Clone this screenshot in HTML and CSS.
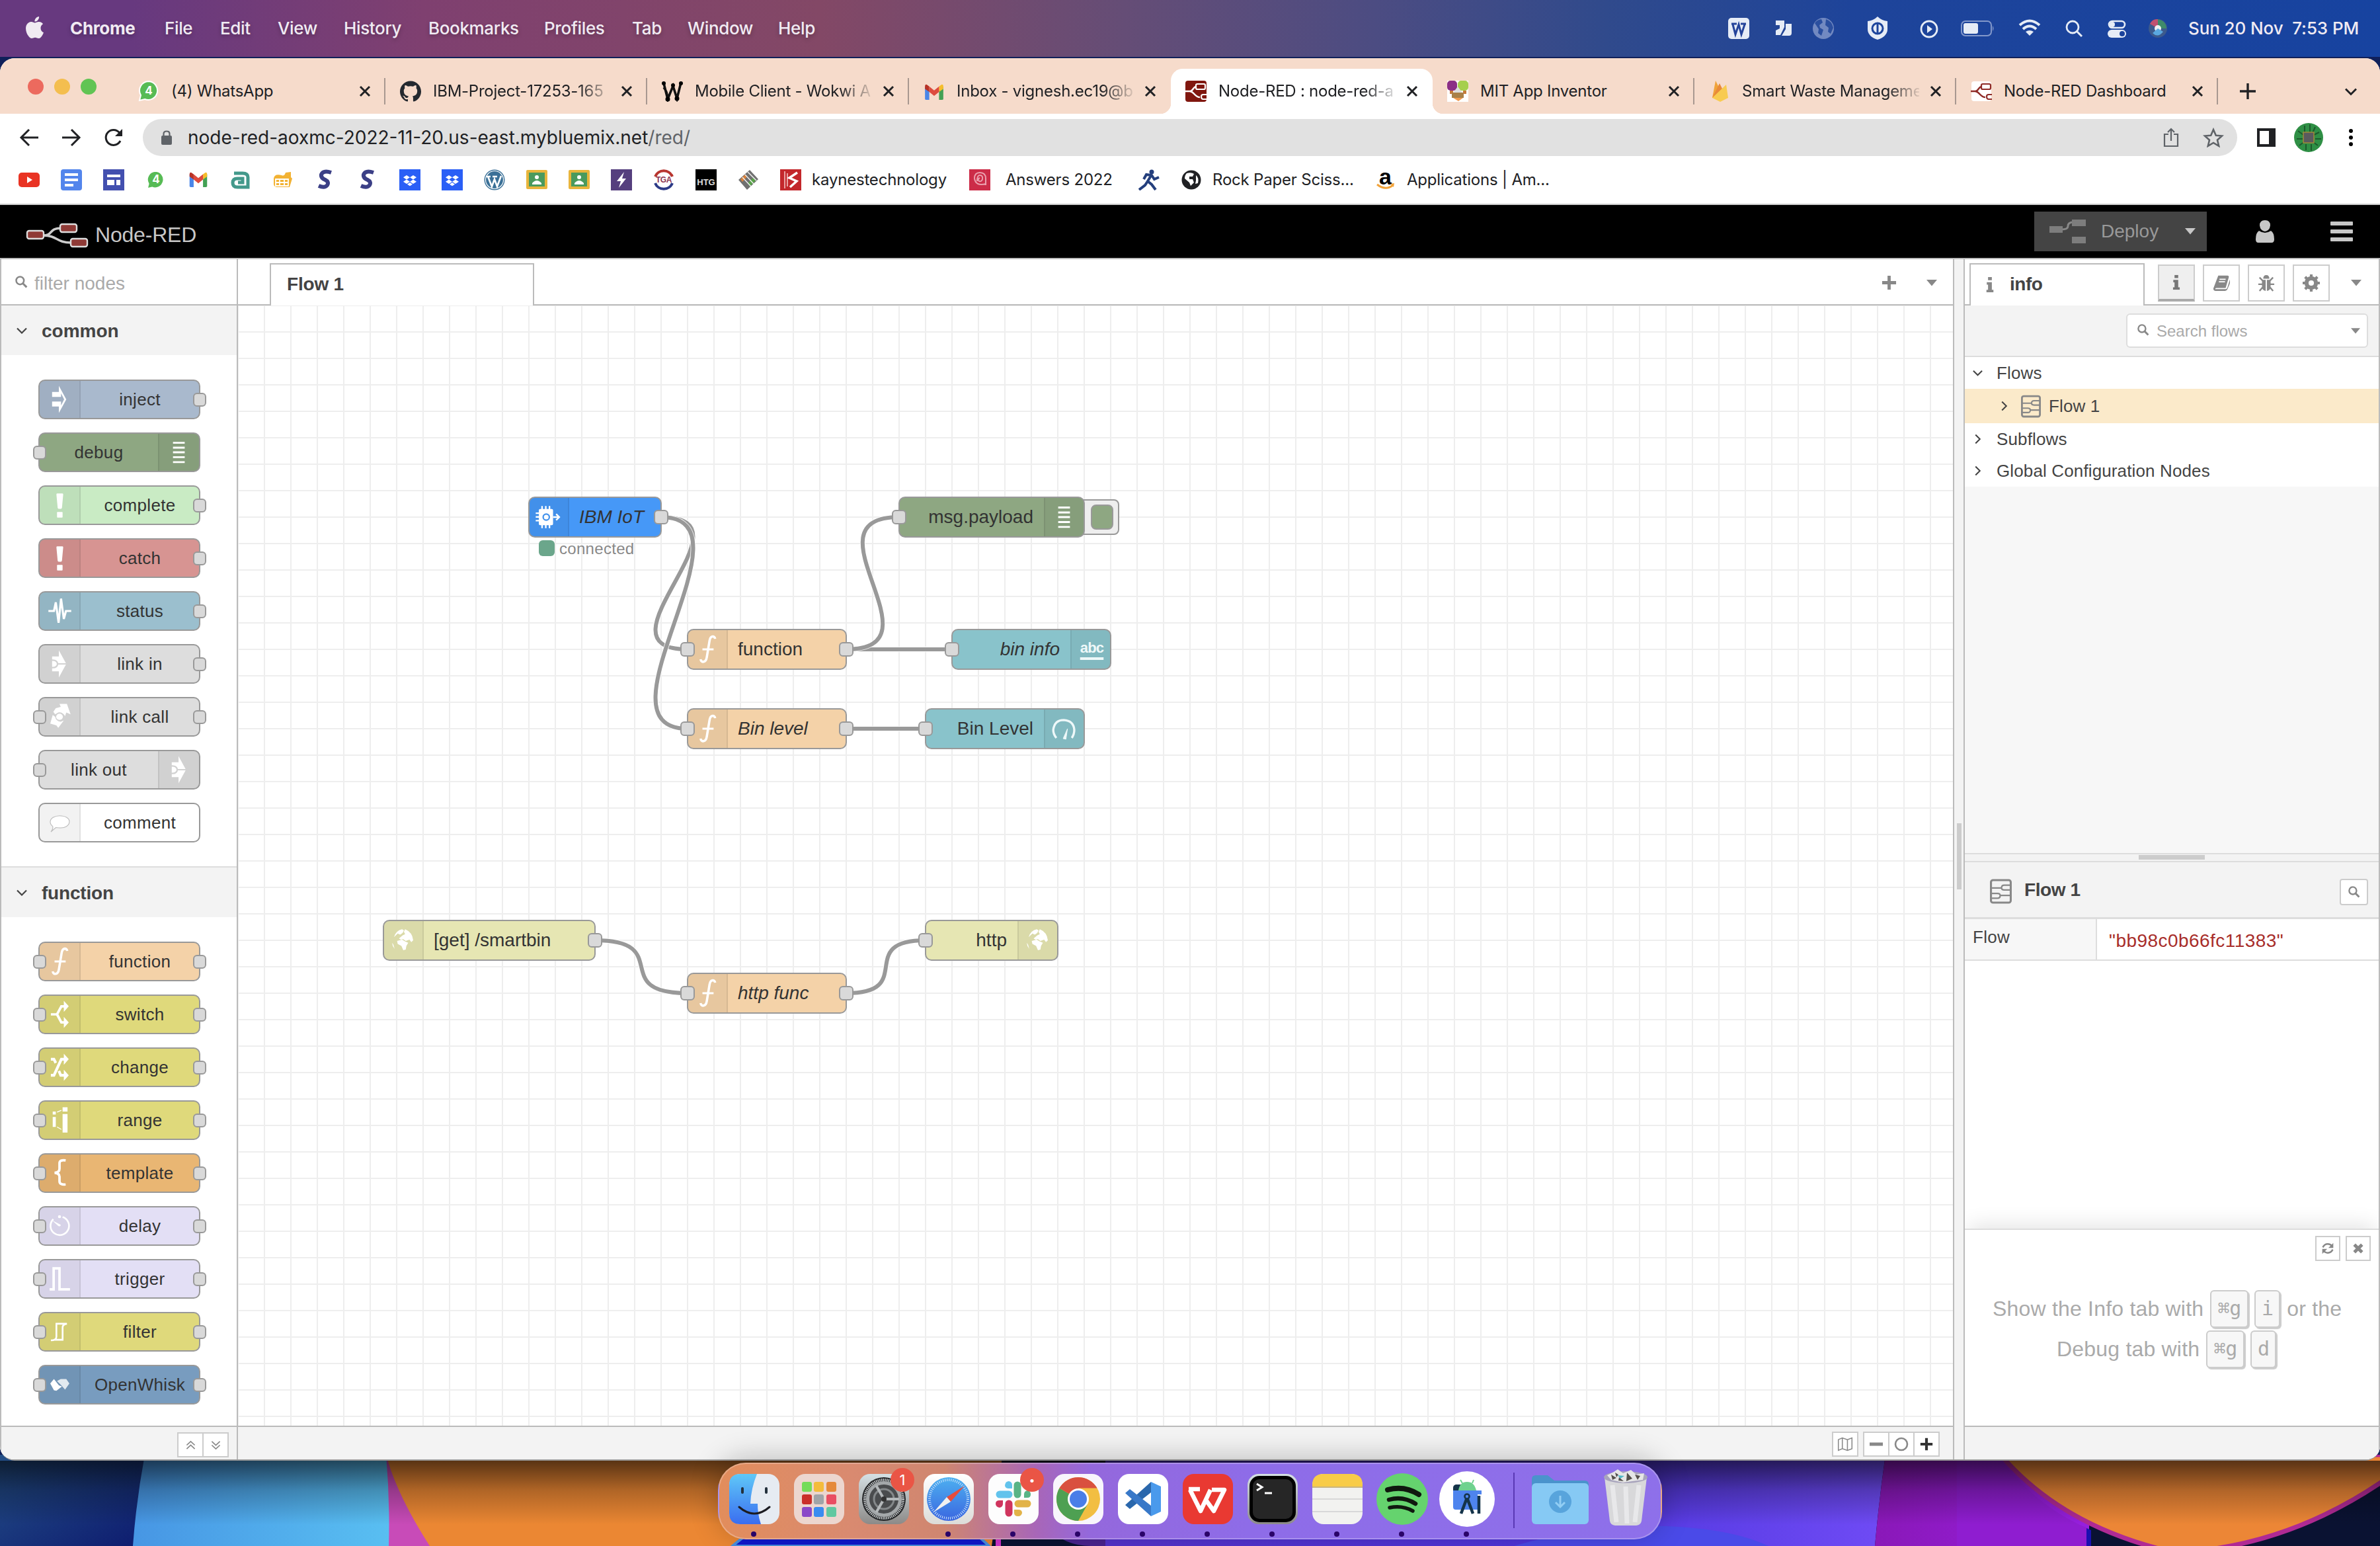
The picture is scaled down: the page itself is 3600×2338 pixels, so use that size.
FILE: index.html
```html
<!DOCTYPE html>
<html lang="en">
<head>
<meta charset="utf-8">
<title>Node-RED : node-red-aoxmc</title>
<link rel="stylesheet" href="styles.css">
</head>
<body>
<svg class="defs" width="0" height="0">
  <defs>
    <symbol id="i-x" viewBox="0 0 24 24"><path d="M5 5L19 19M19 5L5 19" stroke="#202124" stroke-width="3" fill="none"/></symbol>
    <symbol id="i-search" viewBox="0 0 24 24"><circle cx="10" cy="10" r="7" fill="none" stroke="currentColor" stroke-width="3"/><path d="M15 15L22 22" stroke="currentColor" stroke-width="3.6"/></symbol>
    <symbol id="i-down" viewBox="0 0 16 10"><path d="M0 0H16L8 9.5Z" fill="currentColor"/></symbol>
    <symbol id="i-chev" viewBox="0 0 16 10"><path d="M1 1.5L8 8.5L15 1.5" fill="none" stroke="currentColor" stroke-width="2.2"/></symbol>
    <symbol id="i-plus" viewBox="0 0 24 24"><path d="M9.5 1h5v8.500h8.500v5h-8.500v8.500h-5v-8.500h-8.500v-5h8.500z" fill="currentColor"/></symbol>
    <symbol id="i-info" viewBox="0 0 12 24"><path d="M3 0h6v5h-6zM1 8h8v12h2.500v4H.5v-4H3v-8H1z" fill="currentColor"/></symbol>
    <symbol id="i-flow" viewBox="0 0 32 36"><rect x="1.500" y="1.500" width="29" height="33" rx="3" fill="none" stroke="#888" stroke-width="3"/><path d="M2 13H17M30 9H21Q17 9 17 13Q17 16 21 16H30M2 21H11Q15 21 15 24Q15 28 11 28H2M15 24H30" fill="none" stroke="#888" stroke-width="2.200"/></symbol>
    <symbol id="i-gmail" viewBox="0 0 32 26"><path d="M1 4V24Q1 26 3 26H8V11Z" fill="#4a86e8"/><path d="M31 4V24Q31 26 29 26H24V11Z" fill="#43a155"/><path d="M24 4L28 1Q31 0 31 4V8L24 13Z" fill="#f6bd2b"/><path d="M8 4L4 1Q1 0 1 4V8L8 13Z" fill="#b83226"/><path d="M8 4L16 10.500L24 4V13L16 19.500L8 13Z" fill="#dd4b3e"/></symbol>
    <symbol id="i-wa" viewBox="0 0 32 32"><path d="M16 1A14 14 0 0 0 4 22L2 30L10 28A14 14 0 1 0 16 1Z" fill="#57bb55" stroke="#fff" stroke-width="2"/></symbol>
    <symbol id="i-nr" viewBox="0 0 32 32"><path d="M0 16H7C12 16 11 9 17 9M7 16C14 17 14 25 22 25" fill="none" stroke="currentColor" stroke-width="2.400"/><rect x="16" y="5" width="14" height="8" rx="2" fill="none" stroke="currentColor" stroke-width="2.200"/><path d="M32 21H27Q24 21 24 24Q24 28 27 28H32" fill="none" stroke="currentColor" stroke-width="2.200"/></symbol>
    <symbol id="i-dropbox" viewBox="0 0 32 32"><rect width="32" height="32" fill="#2a5ff6"/><path d="M11 9l5 3.200-5 3.200-5-3.200zM21 9l5 3.200-5 3.200-5-3.200zM11 15.500l5 3.200-5 3.200-5-3.200zM21 15.500l5 3.200-5 3.200-5-3.200zM16 20l4 2.700-4 2.600-4-2.600z" fill="#fff"/></symbol>
    <symbol id="i-s" viewBox="0 0 32 32"><path d="M25 5Q13 1 10 8Q9 13 16 16Q22 19 19 24Q15 29 6 25" fill="none" stroke="#3b3f86" stroke-width="6"/></symbol>
    <symbol id="i-class" viewBox="0 0 32 32"><rect y="1" width="32" height="29" rx="2" fill="#e9b53c"/><rect x="4" y="5" width="24" height="21" fill="#4a9a5d"/><circle cx="16" cy="12" r="3" fill="#fff"/><path d="M9 21Q16 13 23 21V23H9Z" fill="#fff"/></symbol>
    <symbol id="n-inject" viewBox="0 0 62 60"><path d="M19 18H30V8L42 30L30 52V41.500H19V33.500H33.500V40L38.500 30L33.500 20V26H19Z" fill="#fff"/></symbol>
    <symbol id="n-debug" viewBox="0 0 62 60"><path d="M21 14.500H40M21 22.500H40M21 30H40M21 38H40M21 46H40" stroke="#fff" stroke-width="3"/></symbol>
    <symbol id="n-alert" viewBox="0 0 62 60"><path d="M26 12.500Q26 11 27.500 11H35.500Q37 11 37 12.500L35 34Q34.500 36 33 36H30Q28.500 36 28 34Z" fill="#fff"/><rect x="27" y="41" width="9" height="9" rx="1" fill="#fff"/></symbol>
    <symbol id="n-status" viewBox="0 0 62 60"><path d="M13 30H22L25 16L29.500 49L33.500 10L38 43L41.500 30H50" fill="none" stroke="#fff" stroke-width="3.400"/></symbol>
    <symbol id="n-link" viewBox="0 0 62 60"><path d="M19 18H30V8L42 30L30 52V42H19Z" fill="#fff"/><path d="M18 24Q27 23 28 30Q27 37 18 36M28 30H43" fill="none" stroke="#d2d2d2" stroke-width="2.400"/></symbol>
    <symbol id="n-call" viewBox="0 0 62 60"><path d="M25 16L33 14L31 9L43 9L49 26L42 23L40 29Q36 22 29 23L24 26L21 22Z" fill="#fff"/><path d="M20 27L24 30Q25 37 33 38L38 36L29 48L26 44L16 41Z" fill="#fff"/><ellipse cx="31" cy="30" rx="5.500" ry="5" fill="#fff"/></symbol>
    <symbol id="n-comment" viewBox="0 0 62 60"><path d="M31 19C41 19 47 23 47 28.500C47 35 40 39 31 38.500Q27 38 25 38L17 45Q21 40 20 36Q16 33 16 29C16 23 23 19 31 19Z" fill="#fff" stroke="#bbb" stroke-width="1.200"/></symbol>
    <symbol id="n-fn" viewBox="0 0 62 60"><path d="M43.500 13C43 8 36 7 34.500 16L30 43C28.500 52 21 52 20 46" fill="none" stroke="#fff" stroke-width="3.800"/><path d="M23 30H41" stroke="#fff" stroke-width="3"/></symbol>
    <symbol id="n-switch" viewBox="0 0 62 60"><path d="M17 30H27L34 17H39M27 30L34 43H39" fill="none" stroke="#fff" stroke-width="4"/><path d="M38 8L46 17L38 26ZM38 34L46 43L38 52Z" fill="#fff"/></symbol>
    <symbol id="n-change" viewBox="0 0 62 60"><path d="M17 43H22L34 17H39M17 17H22L25 23M30 36L33 43H39" fill="none" stroke="#fff" stroke-width="4.400"/><path d="M38 8L46 17L38 26ZM38 34L46 43L38 52Z" fill="#fff"/></symbol>
    <symbol id="n-range" viewBox="0 0 62 60"><path d="M20 16h5v5h-5zM20 25h5v16h-5zM36 9h8v7h-8zM36 20h8v30h-8z" fill="#fff"/><path d="M27 17L34 14M27 41L34 45" stroke="#fff" stroke-width="1.500"/></symbol>
    <symbol id="n-tpl" viewBox="0 0 62 60"><path d="M41 9.500Q31 8 31 14V23Q31 29 23 29.500Q31 30 31 36V43Q31 49.500 41 48.500" fill="none" stroke="#fff" stroke-width="4"/></symbol>
    <symbol id="n-delay" viewBox="0 0 62 60"><path d="M36 15.500A15 15 0 1 1 21 19" fill="none" stroke="#fff" stroke-width="2.800"/><path d="M19 21L33 28Q33 32 29 30Z" fill="#fff"/><circle cx="31" cy="15" r="2.500" fill="#fff"/></symbol>
    <symbol id="n-trigger" viewBox="0 0 62 60"><path d="M15 47H21.500V13H31V47H48" fill="none" stroke="#fff" stroke-width="4"/></symbol>
    <symbol id="n-filter" viewBox="0 0 62 60"><path d="M17 44Q26 44 26 38V17H43Q36 18 36 23V43H22" fill="none" stroke="#fff" stroke-width="2.800"/></symbol>
    <symbol id="n-whisk" viewBox="0 0 62 60"><path d="M16 28L22 21L30 31L35 33L26 40L22 39Z" fill="#fff"/><path d="M27 24L33 21L42 21L47 28L40 38L34 31Z" fill="#fff" opacity=".8"/></symbol>
    <symbol id="n-iot" viewBox="0 0 62 60"><path d="M15 19Q15 17 17 17H36Q38 17 38 19V41Q38 43 36 43H17Q15 43 15 41ZM19 12h2.500v6h-2.500zM25 12h2.500v6h-2.500zM31 12h2.500v6h-2.500zM19 42h2.500v6h-2.500zM25 42h2.500v6h-2.500zM31 42h2.500v6h-2.500zM10 22.500h6v2.500h-6zM10 28.500h6v2.500h-6zM10 34.500h6v2.500h-6z" fill="#fff"/><circle cx="27" cy="30" r="5" fill="none" stroke="#4292ec" stroke-width="2.400"/><path d="M38 30H46M43 25L48 30L43 35" fill="none" stroke="#fff" stroke-width="2.600"/></symbol>
    <symbol id="n-globe" viewBox="0 0 62 60"><path d="M16 25Q19 14 29 12L32 14L30 18L26 21L22 19ZM34 12Q46 17 47 30L44 33L41 29L35 31L31 28L27 29L24 27L30 22L34 20L32 16ZM21 31L29 29L34 32L39 34L36 39L35 45L31 46L28 39L22 36ZM13 34L15 37L17 44L14 39Z" fill="#fff"/></symbol>
    <symbol id="n-gauge" viewBox="0 0 62 60"><path d="M18 45Q13 39 13 32Q15 16 30 16Q46 17 47 32Q47 39 43 45" fill="none" stroke="#eef8f9" stroke-width="3.600"/><path d="M29 46L36 30L33.500 47Z" fill="#eef8f9" stroke="#eef8f9"/></symbol>
    <linearGradient id="wBlue" x1="0" y1="0" x2="1" y2="1"><stop offset="0" stop-color="#245088"/><stop offset="1" stop-color="#0d1a6e"/></linearGradient>
    <linearGradient id="wSky" x1="0" y1="0" x2="1" y2="0"><stop offset="0" stop-color="#4796e4"/><stop offset="1" stop-color="#59c0f2"/></linearGradient>
    <linearGradient id="wVio" x1="0" y1="0" x2="1" y2="0"><stop offset="0" stop-color="#5433cc"/><stop offset=".6" stop-color="#4f35dc"/><stop offset="1" stop-color="#6f4bf5"/></linearGradient>
    <linearGradient id="wPur" x1="0" y1="0" x2="1" y2="0"><stop offset="0" stop-color="#8a18b8"/><stop offset="1" stop-color="#971fe0"/></linearGradient>
    <linearGradient id="wShade" x1="0" y1="0" x2="0" y2="1"><stop offset="0" stop-color="#000" stop-opacity=".62"/><stop offset=".35" stop-color="#000" stop-opacity=".25"/><stop offset=".75" stop-color="#000" stop-opacity="0"/></linearGradient>
    <linearGradient id="gFinder" x1="0" y1="0" x2="0" y2="1"><stop offset="0" stop-color="#5fc8f8"/><stop offset="1" stop-color="#3a6df0"/></linearGradient>
    <linearGradient id="gGrey" x1="0" y1="0" x2="0" y2="1"><stop offset="0" stop-color="#d5e0e4"/><stop offset="1" stop-color="#8c8a88"/></linearGradient>
    <linearGradient id="gSafari" x1="0" y1="0" x2="0" y2="1"><stop offset="0" stop-color="#4db0f0"/><stop offset="1" stop-color="#3a66e0"/></linearGradient>
    <linearGradient id="gWhite" x1="0" y1="0" x2="0" y2="1"><stop offset="0" stop-color="#fff"/><stop offset="1" stop-color="#dcdcd8"/></linearGradient>
  </defs>
</svg>

<svg class="wallpaper" viewBox="0 2200 3600 138" width="3600" height="138">
  <rect y="2200" width="3600" height="138" fill="#0a1232"/>
  <rect y="2200" width="230" height="138" fill="url(#wBlue)"/>
  <path d="M219 2200Q206 2270 201 2338H600V2200Z" fill="url(#wSky)"/>
  <path d="M584 2200Q590 2270 588 2338H660L620 2200Z" fill="#c84bb8"/>
  <path d="M584 2200Q600 2260 650 2338H1500L1520 2200Z" fill="#eb8733"/>
  <path d="M1108 2338Q1150 2300 1220 2290H1390Q1460 2300 1496 2338Z" fill="#1018d0" stroke="#4a90e0" stroke-width="4"/>
  <path d="M1506 2320H1514V2338H1506Z" fill="#d432cc"/>
  <path d="M1515 2200H1680V2338H1515Z" fill="#0a1232"/>
  <path d="M1585 2310Q1610 2338 1650 2338H1680V2310Z" fill="#4a2490"/>
  <path d="M1672 2200H2852Q2842 2270 2836 2338H1672Z" fill="url(#wVio)"/>
  <path d="M2290 2338Q2400 2305 2520 2308Q2620 2312 2675 2338Z" fill="#4a4ae8"/>
  <path d="M2852 2200H3160V2338H2836Q2842 2270 2852 2200Z" fill="url(#wPur)"/>
  <path d="M3026 2200Q3120 2310 3290 2348Q3460 2340 3610 2236V2200Z" fill="#ec8636" stroke="#b02a94" stroke-width="7"/>
  <path d="M3020 2200Q3080 2280 3160 2312L3156 2340H2960V2200Z" fill="#8f1dd0"/>
  <path d="M3156 2311L3163 2314V2338H3156Z" fill="#1a10b0"/>
  <rect y="2209" width="3600" height="129" fill="url(#wShade)"/>
</svg>

<header class="menubar">
  <svg class="apple" viewBox="0 0 24 24"><path fill="#f0eaf2" d="M12.152 6.896c-.948 0-2.415-1.078-3.960-1.040-2.040.027-3.910 1.183-4.961 3.014-2.117 3.675-.546 9.103 1.519 12.090 1.013 1.454 2.208 3.090 3.792 3.039 1.520-.065 2.090-.987 3.935-.987 1.831 0 2.350.987 3.960.948 1.637-.026 2.676-1.480 3.676-2.948 1.156-1.688 1.636-3.325 1.662-3.415-.039-.013-3.182-1.221-3.220-4.857-.026-3.040 2.480-4.494 2.597-4.559-1.429-2.090-3.623-2.324-4.390-2.376-2-.156-3.675 1.090-4.610 1.090zM15.530 3.830c.843-1.012 1.400-2.427 1.245-3.830-1.207.052-2.662.805-3.532 1.818-.780.896-1.454 2.338-1.273 3.714 1.338.104 2.715-.688 3.559-1.701"/></svg>
  <nav class="menus"><b>Chrome</b><span>File</span><span>Edit</span><span>View</span><span>History</span><span>Bookmarks</span><span>Profiles</span><span>Tab</span><span>Window</span><span>Help</span></nav>
  <svg class="tray" viewBox="2600 0 700 86" width="700" height="86">
    <rect x="2614" y="27" width="32" height="32" rx="5" fill="#e6ecf6"/><path d="M2619 36h8M2633 36h8M2621 37l4 15 5-15 4 15 5-15" fill="none" stroke="#24439a" stroke-width="3"/>
    <path d="M2686 31h13v10l-6 12h-7v-7l6-3v-5h-6zM2701 36h9v14q0 4-4 4h-11l6-10z" fill="#e6ecf6"/>
    <circle cx="2758" cy="43" r="16" fill="#7289c1"/><path d="M2745 35Q2748 30 2755 29L2757 34L2752 38L2753 42L2758 45L2755 54L2750 50L2751 44ZM2762 29Q2771 32 2773 42L2769 51L2765 48L2766 42L2761 38Z" fill="#2b4f9f"/>
    <path d="M2840 25q6 6 15 7v12q0 11-15 16q-15-5-15-16v-12q9-1 15-7z" fill="#e6ecf6"/><circle cx="2840" cy="43" r="8" fill="none" stroke="#1d459c" stroke-width="3"/><path d="M2840 36v14" stroke="#1d459c" stroke-width="3"/>
    <circle cx="2918" cy="44" r="12" fill="none" stroke="#e6ecf6" stroke-width="2.800"/><path d="M2915 38l8 6-8 6z" fill="#e6ecf6"/>
    <rect x="2967" y="32" width="45" height="22" rx="6" fill="none" stroke="#8398ca" stroke-width="2"/><rect x="2970" y="35" width="22" height="16" rx="3" fill="#e6ecf6"/><path d="M3014 39q3 4 0 8z" fill="#8398ca"/>
    <path d="M3055 38q15-13 30 0M3060 44q10-9 20 0" fill="none" stroke="#e6ecf6" stroke-width="4"/><path d="M3064 48q6-4 12 0l-6 6z" fill="#e6ecf6"/>
    <circle cx="3135" cy="41" r="9" fill="none" stroke="#e6ecf6" stroke-width="2.800"/><path d="M3141 47l8 8" stroke="#e6ecf6" stroke-width="3"/>
    <rect x="3190" y="32" width="24" height="10" rx="5" fill="none" stroke="#e6ecf6" stroke-width="2.600"/><circle cx="3195" cy="37" r="4" fill="#e6ecf6"/><rect x="3188" y="45" width="28" height="12" rx="6" fill="#e6ecf6"/><circle cx="3210" cy="51" r="4" fill="#1a439c"/>
    <circle cx="3264" cy="43" r="14" fill="#3c5a8c"/><path d="M3252 36q4-8 12-7v14z" fill="#c05070"/><path d="M3264 29q12 2 13 14h-13z" fill="#3f8a6a"/><circle cx="3264" cy="43" r="5" fill="#fff" opacity=".9"/><path d="M3256 50q8 8 16-2l-8-5z" fill="#5aa8e0"/>
  </svg>
  <span class="clock">Sun 20 Nov&nbsp; 7:53 PM</span>
</header>

<main class="window">
  <div class="tabstrip">
    <div class="lights"><i class="red"></i><i class="amber"></i><i class="green"></i></div>
    <div class="tab"><span class="fav wa"><svg viewBox="0 0 32 32"><use href="#i-wa"/></svg><b>4</b></span><span class="title">(4) WhatsApp</span><svg class="close"><use href="#i-x"/></svg></div>
    <div class="tab"><span class="fav"><svg viewBox="0 0 24 24"><path fill="#24292f" d="M12 .297c-6.630 0-12 5.373-12 12 0 5.303 3.438 9.800 8.205 11.385.6.113.82-.258.82-.577 0-.285-.010-1.040-.015-2.040-3.338.724-4.042-1.610-4.042-1.610C4.422 18.070 3.633 17.700 3.633 17.700c-1.087-.744.084-.729.084-.729 1.205.084 1.838 1.236 1.838 1.236 1.070 1.835 2.809 1.305 3.495.998.108-.776.417-1.305.760-1.605-2.665-.3-5.466-1.332-5.466-5.930 0-1.310.465-2.380 1.235-3.220-.135-.303-.540-1.523.105-3.176 0 0 1.005-.322 3.300 1.230.960-.267 1.980-.399 3-.405 1.020.006 2.040.138 3 .405 2.280-1.552 3.285-1.230 3.285-1.230.645 1.653.240 2.873.120 3.176.765.840 1.230 1.910 1.230 3.220 0 4.610-2.805 5.625-5.475 5.920.420.360.810 1.096.810 2.220 0 1.606-.015 2.896-.015 3.286 0 .315.210.690.825.570C20.565 22.092 24 17.592 24 12.297c0-6.627-5.373-12-12-12"/></svg></span><span class="title fade">IBM-Project-17253-165</span><svg class="close"><use href="#i-x"/></svg></div>
    <div class="tab"><span class="fav"><svg viewBox="0 0 32 32"><path d="M3 4L9 28L17 8L23 27L29 3M3 10Q8 16 9 28" fill="none" stroke="#111" stroke-width="3.600"/><circle cx="3" cy="4" r="3"/><circle cx="9" cy="28" r="3.500"/><circle cx="23" cy="27" r="3.500"/><circle cx="29" cy="4" r="3"/><circle cx="17" cy="7" r="3"/></svg></span><span class="title fade">Mobile Client - Wokwi A</span><svg class="close"><use href="#i-x"/></svg></div>
    <div class="tab nosep"><span class="fav"><svg viewBox="0 0 32 32"><use href="#i-gmail" x="1" y="5" width="30" height="24"/></svg></span><span class="title fade">Inbox - vignesh.ec19@b</span><svg class="close"><use href="#i-x"/></svg></div>
    <div class="tab active"><span class="fav"><svg class="nrfav" viewBox="0 0 32 32"><rect width="32" height="32" rx="4" fill="#80170f"/><use href="#i-nr"/></svg></span><span class="title fade">Node-RED : node-red-a</span><svg class="close"><use href="#i-x"/></svg></div>
    <div class="tab"><span class="fav"><svg viewBox="0 0 32 32"><rect width="32" height="32" fill="#fff"/><rect y="0" width="15" height="15" rx="5" fill="#8b2f86"/><rect x="16" width="16" height="15" rx="5" fill="#a6cf4d"/><path d="M16 9l7 9H9z" fill="#ddd"/><path d="M4 15h5v5H4zM24 15h5v5h-5z" fill="#c77a3a"/><rect x="7" y="18" width="18" height="8" fill="#a98048"/><path d="M9 26h15l-7 5z" fill="#f09a50"/></svg></span><span class="title">MIT App Inventor</span><svg class="close"><use href="#i-x"/></svg></div>
    <div class="tab"><span class="fav"><svg viewBox="0 0 32 32"><path d="M5 26L10 0L17 14Z" fill="#f0a33a"/><path d="M5 26L16 4L20 12L24 26Z" fill="#e8893a"/><path d="M5 26L26 6L29 26L17 32Z" fill="#f8cb50"/></svg></span><span class="title fade">Smart Waste Manageme</span><svg class="close"><use href="#i-x"/></svg></div>
    <div class="tab"><span class="fav"><svg class="dashfav" viewBox="0 0 32 32"><rect x="1" y="1" width="30" height="30" rx="4" fill="#fff"/><use href="#i-nr"/></svg></span><span class="title">Node-RED Dashboard</span><svg class="close"><use href="#i-x"/></svg></div>
    <svg class="newtab" viewBox="0 0 24 24"><path d="M12 0V24M0 12H24" stroke="#202124" stroke-width="3.400"/></svg>
    <svg class="tabsearch" viewBox="0 0 18 12"><path d="M1 1.500L9 9.500L17 1.500" fill="none" stroke="#202124" stroke-width="3"/></svg>
  </div>

  <div class="toolbar">
    <svg class="nav" viewBox="0 0 32 32"><path d="M30 16H4M16 4L4 16L16 28" fill="none" stroke="#202124" stroke-width="3"/></svg>
    <svg class="nav" viewBox="0 0 32 32"><path d="M2 16H28M16 4L28 16L16 28" fill="none" stroke="#202124" stroke-width="3"/></svg>
    <svg class="nav" viewBox="0 0 32 32"><path d="M26 21A11.500 11.500 0 1 1 24.500 8.500L27 11" fill="none" stroke="#202124" stroke-width="3"/><path d="M29 3V14H18Z" fill="#202124"/></svg>
    <div class="omnibox">
      <svg class="lock" viewBox="0 0 16 22"><rect y="8" width="16" height="14" rx="2" fill="#5f6368"/><path d="M3.500 9V5.500Q3.500 1.500 8 1.500Q12.500 1.500 12.500 5.500V9" fill="none" stroke="#5f6368" stroke-width="2.200"/></svg>
      <span class="url">node-red-aoxmc-2022-11-20.us-east.mybluemix.net<em>/red/</em></span>
      <svg class="share" viewBox="0 0 24 30"><path d="M8 10H2V28H22V10H16M12 20V2M7 7L12 2L17 7" fill="none" stroke="#5f6368" stroke-width="2.200"/></svg>
      <svg class="star" viewBox="0 0 32 30"><path d="M16 3L19.800 11.800L29 12.500L22 18.700L24.200 27.800L16 22.900L7.800 27.800L10 18.700L3 12.500L12.200 11.800Z" fill="none" stroke="#5f6368" stroke-width="2.600"/></svg>
    </div>
    <svg class="panel" viewBox="0 0 28 28"><path d="M0 0H28V28H0ZM4 4V24H18V4Z" fill="#202124" fill-rule="evenodd"/></svg>
    <svg class="avatar" viewBox="0 0 44 44"><circle cx="22" cy="22" r="22" fill="#2f8f45"/><path d="M6 12l8 6M4 24h9M8 34l8-6M16 4v10M24 2v12M32 6l-4 9M38 14l-8 4M41 24h-9M36 34l-7-5M26 42v-10M18 41v-9" stroke="#1c5a2c" stroke-width="2"/><rect x="14" y="14" width="16" height="16" fill="#5a5a5e" stroke="#a08a3a" stroke-width="1.500"/></svg>
    <svg class="dots" viewBox="0 0 6 28"><circle cx="3" cy="4" r="3"/><circle cx="3" cy="14" r="3"/><circle cx="3" cy="24" r="3"/></svg>
  </div>

  <div class="bookmarks">
    <svg viewBox="0 0 32 32"><rect y="5" width="32" height="22" rx="5" fill="#e93323"/><path d="M13 11l8 5-8 5z" fill="#fff"/></svg>
    <svg viewBox="0 0 32 32"><rect width="32" height="32" rx="4" fill="#5385ec"/><path d="M6 8H26M6 16H26M6 24H19" stroke="#fff" stroke-width="4"/></svg>
    <svg viewBox="0 0 32 32"><rect width="32" height="32" fill="#4350af"/><path d="M6 8h20v4H6zM6 16h11v8H6zM20 16h6v8h-6z" fill="#fff"/></svg>
    <span class="bm wa"><svg viewBox="0 0 32 32"><use href="#i-wa" x="1" y="2" width="29" height="29"/></svg><b>4</b></span>
    <svg viewBox="0 0 32 32"><use href="#i-gmail" x="1" y="4" width="30" height="23"/></svg>
    <svg viewBox="0 0 32 32"><path d="M6 6H19Q27 6 27 12V27H11Q4 27 4 20.500Q4 14 11 14H19V20H12" fill="none" stroke="#43998b" stroke-width="5"/></svg>
    <svg viewBox="0 0 32 32"><path d="M2 14Q3 6 14 9Q18 11 20 5L28 4V12L30 14L26 27H6Q2 26 2 22Z" fill="#f2b233"/><path d="M5 15H24V25H5ZM5 20H24M11 15V25M18 15V25" fill="none" stroke="#fff" stroke-width="1.800"/></svg>
    <svg viewBox="0 0 32 32"><use href="#i-s"/></svg>
    <svg viewBox="0 0 32 32"><use href="#i-s"/></svg>
    <svg viewBox="0 0 32 32"><use href="#i-dropbox"/></svg>
    <svg viewBox="0 0 32 32"><use href="#i-dropbox"/></svg>
    <svg viewBox="0 0 32 32"><circle cx="16" cy="16" r="15.500" fill="#3a7097"/><circle cx="16" cy="16" r="13.500" fill="none" stroke="#fff" stroke-width="1.200"/><path d="M6 11L12 26L16 15L20 26L26 10M4 11H10M13 11H20" fill="none" stroke="#fff" stroke-width="2.600"/></svg>
    <svg viewBox="0 0 32 32"><use href="#i-class"/></svg>
    <svg viewBox="0 0 32 32"><use href="#i-class"/></svg>
    <svg viewBox="0 0 32 32"><rect width="32" height="32" fill="#553f7e"/><path d="M20 4L9 18H15L12 28L23 14H17Z" fill="#fff"/></svg>
    <span class="bm tga"><svg viewBox="0 0 32 32"><path d="M3 11A14 14 0 0 1 29 11" fill="none" stroke="#b8352f" stroke-width="4"/><path d="M3 21A14 14 0 0 0 29 21" fill="none" stroke="#2c3a86" stroke-width="4"/></svg><b>TGA</b></span>
    <span class="bm htg"><b>HTG</b></span>
    <svg viewBox="0 0 32 32"><path d="M18 1L31 15L14 31L1 16Z" fill="#707070"/><path d="M4 15l7-7 3 3-7 8z" fill="#d8803a"/><path d="M15 21l8-8 4 4-9 9z" fill="#58a048"/><path d="M11 8L24 22M15 4L28 17M7 12L20 26" stroke="#eee" stroke-width="1.500"/></svg>
    <svg viewBox="0 0 32 32"><rect width="32" height="32" fill="#c3272b"/><path d="M7 3V29M11 6V26" stroke="#e9a0a0" stroke-width="2"/><path d="M26 5L14 13L25 18L15 27" fill="none" stroke="#fff" stroke-width="3.500"/></svg>
    <span class="bt t1">kaynestechnology</span>
    <svg viewBox="0 0 32 32"><rect width="32" height="32" fill="#cc2c48"/><path d="M8 14Q8 5 16 5Q25 5 25 14V24M25 22Q10 26 8 14M12 18Q12 9 16 9Q21 9 20 15Q19 19 15 18Q12 15 16 13" fill="none" stroke="#eba0ae" stroke-width="2"/></svg>
    <span class="bt t2">Answers 2022</span>
    <svg viewBox="0 0 32 32"><circle cx="20" cy="4" r="3.500" fill="#243f7d"/><path d="M20 8L14 18L20 23L26 31M14 18L10 24L1 31M8 15L12 8L20 9L24 15L31 12" fill="none" stroke="#243f7d" stroke-width="4"/></svg>
    <svg viewBox="0 0 32 32"><circle cx="16" cy="16" r="14.500" fill="#202124"/><path d="M9 6Q16 4 20 7L18 11H13V15H18L20 20L15 25L13 20L6 14Q6 9 9 6ZM23 9Q28 13 26 21L22 22L23 17Z" fill="#fff"/></svg>
    <span class="bt t3">Rock Paper Sciss...</span>
    <span class="bm amz"><b>a</b><svg viewBox="0 0 32 32"><path d="M3 23Q16 33 27 24" fill="none" stroke="#f2a33a" stroke-width="3"/><path d="M23 22l6-1-1 6z" fill="#f2a33a"/></svg></span>
    <span class="bt t4">Applications | Am...</span>
  </div>

  <div class="nr-header">
    <svg class="nr-logo" viewBox="0 0 96 40"><path d="M26 19C42 19 34 8 54 8M26 19C48 19 46 30 68 30" fill="none" stroke="#ccc" stroke-width="3.500"/><g fill="#8f3a36" stroke="#ddd" stroke-width="2.400"><rect x="2" y="12" width="25" height="12" rx="3"/><rect x="52" y="2" width="25" height="12" rx="3"/><rect x="68" y="24" width="25" height="12" rx="3"/></g></svg>
    <span class="nr-name">Node-RED</span>
    <div class="deploy"><svg class="dicon" viewBox="0 0 56 40"><path d="M18 17Q28 17 28 12Q28 6 36 6" fill="none" stroke="#888" stroke-width="3"/><path d="M0 12H20V22H0ZM34 2H55V12H34ZM34 28H55V38H34Z" fill="#7d7d7d"/></svg><span>Deploy</span><svg class="dcaret"><use href="#i-down"/></svg></div>
    <svg class="user" viewBox="0 0 30 36"><path d="M15 1Q23 1 23 9Q22 17 15 18Q8 17 7 9Q7 1 15 1ZM6 17Q15 23 24 17Q29 20 29 30Q29 35 25 35H5Q1 35 1 30Q1 20 6 17Z" fill="#c7c7c7"/></svg>
    <div class="burger"><i></i><i></i><i></i></div>
  </div>

  <div class="editor">
    <aside class="palette">
      <div class="filter"><svg><use href="#i-search"/></svg><span>filter nodes</span></div>
      <div class="scroll">
        <div class="cat"><svg><use href="#i-chev"/></svg>common</div>
        <div class="list">
          <div class="node c-inject out"><svg class="ic"><use href="#n-inject"/></svg><span>inject</span></div>
          <div class="node c-debug in"><span>debug</span><svg class="ic r"><use href="#n-debug"/></svg></div>
          <div class="node c-complete out"><svg class="ic"><use href="#n-alert"/></svg><span>complete</span></div>
          <div class="node c-catch out"><svg class="ic"><use href="#n-alert"/></svg><span>catch</span></div>
          <div class="node c-status out"><svg class="ic"><use href="#n-status"/></svg><span>status</span></div>
          <div class="node c-link out"><svg class="ic"><use href="#n-link"/></svg><span>link in</span></div>
          <div class="node c-link in out"><svg class="ic"><use href="#n-call"/></svg><span>link call</span></div>
          <div class="node c-link in"><span>link out</span><svg class="ic r"><use href="#n-link"/></svg></div>
          <div class="node c-comment"><svg class="ic"><use href="#n-comment"/></svg><span>comment</span></div>
        </div>
        <div class="cat second"><svg><use href="#i-chev"/></svg>function</div>
        <div class="list">
          <div class="node c-fn in out"><svg class="ic"><use href="#n-fn"/></svg><span>function</span></div>
          <div class="node c-switch in out"><svg class="ic"><use href="#n-switch"/></svg><span>switch</span></div>
          <div class="node c-switch in out"><svg class="ic"><use href="#n-change"/></svg><span>change</span></div>
          <div class="node c-switch in out"><svg class="ic"><use href="#n-range"/></svg><span>range</span></div>
          <div class="node c-tpl in out"><svg class="ic"><use href="#n-tpl"/></svg><span>template</span></div>
          <div class="node c-delay in out"><svg class="ic"><use href="#n-delay"/></svg><span>delay</span></div>
          <div class="node c-delay in out"><svg class="ic"><use href="#n-trigger"/></svg><span>trigger</span></div>
          <div class="node c-switch in out"><svg class="ic"><use href="#n-filter"/></svg><span>filter</span></div>
          <div class="node c-whisk in out"><svg class="ic"><use href="#n-whisk"/></svg><span>OpenWhisk</span></div>
        </div>
      </div>
      <div class="foot pfoot">
        <div class="btns"><span class="fb"><svg viewBox="0 0 16 16"><path d="M1.500 8L8 2L14.500 8M1.500 14L8 8L14.500 14" fill="none" stroke="#888" stroke-width="1.800"/></svg></span><span class="fb"><svg viewBox="0 0 16 16"><path d="M1.500 2L8 8L14.500 2M1.500 8L8 14L14.500 8" fill="none" stroke="#888" stroke-width="1.800"/></svg></span></div>
      </div>
    </aside>

    <section class="workspace">
      <div class="wtabs"><div class="wtab">Flow 1</div><svg class="wplus"><use href="#i-plus"/></svg><svg class="wcaret"><use href="#i-down"/></svg></div>
      <div class="canvas">
        <svg class="wires" viewBox="360 462 2594 1694" width="2594" height="1694">
          <g class="wire"><path d="M1000 782C1150 782 890 982 1040 982"/><path d="M1000 782C1150 782 890 982 1040 982"/></g>
          <g class="wire"><path d="M1000 782C1150 782 890 1102 1040 1102"/><path d="M1000 782C1150 782 890 1102 1040 1102"/></g>
          <g class="wire"><path d="M1280 982H1440"/><path d="M1280 982H1440"/></g>
          <g class="wire"><path d="M1280 982C1430 982 1210 782 1360 782"/><path d="M1280 982C1430 982 1210 782 1360 782"/></g>
          <g class="wire"><path d="M1280 1102H1400"/><path d="M1280 1102H1400"/></g>
          <g class="wire"><path d="M900 1422C1021 1422 919 1502 1040 1502"/><path d="M900 1422C1021 1422 919 1502 1040 1502"/></g>
          <g class="wire"><path d="M1280 1502C1388 1502 1292 1422 1400 1422"/><path d="M1280 1502C1388 1502 1292 1422 1400 1422"/></g>
        </svg>
        <div class="node big c-iot out p-iot"><svg class="ic"><use href="#n-iot"/></svg><span><i>IBM IoT</i></span></div>
        <div class="state"><i></i>connected</div>
        <div class="dbgbtn"><i></i></div>
        <div class="node big c-debug in p-dbg"><span>msg.payload</span><svg class="ic r"><use href="#n-debug"/></svg></div>
        <div class="node big c-fn in out p-fn"><svg class="ic"><use href="#n-fn"/></svg><span>function</span></div>
        <div class="node big c-ui in p-info"><span><i>bin info</i></span><div class="ic r abc">abc</div></div>
        <div class="node big c-fn in out p-lvl"><svg class="ic"><use href="#n-fn"/></svg><span><i>Bin level</i></span></div>
        <div class="node big c-ui in p-gauge"><span>Bin Level</span><svg class="ic r"><use href="#n-gauge"/></svg></div>
        <div class="node big c-http out p-get"><svg class="ic"><use href="#n-globe"/></svg><span>[get] /smartbin</span></div>
        <div class="node big c-fn in out p-hfn"><svg class="ic"><use href="#n-fn"/></svg><span><i>http func</i></span></div>
        <div class="node big c-http in p-http"><span>http</span><svg class="ic r"><use href="#n-globe"/></svg></div>
      </div>
      <div class="foot wfoot">
        <div class="btns"><span class="fb"><svg viewBox="0 0 28 26"><path d="M2 5L9 2L18 5L26 2V21L18 24L9 21L2 24ZM9 2V21M18 5V24" fill="none" stroke="#888" stroke-width="1.800"/></svg></span></div>
        <div class="btns"><span class="fb"><svg viewBox="0 0 24 24"><path d="M2 9.500H22V14.500H2Z" fill="#888"/></svg></span><span class="fb"><svg viewBox="0 0 24 24"><circle cx="12" cy="12" r="9" fill="none" stroke="#888" stroke-width="2.600"/></svg></span><span class="fb"><svg><use href="#i-plus" x="2" y="2" width="20" height="20"/></svg></span></div>
      </div>
    </section>

    <div class="splitter"><i></i></div>

    <aside class="sidebar">
      <div class="stabs">
        <div class="stab"><svg><use href="#i-info"/></svg>info</div>
        <span class="sb on"><svg viewBox="0 0 28 28"><use href="#i-info" x="8" y="2" width="12" height="24"/></svg></span>
        <span class="sb"><svg viewBox="0 0 28 28"><path d="M9 2H24Q27 2 26 5L21 22H6Q4 22 4 24H21Q23 24 24 21L28 8Q29 12 27 17L24 24Q23 27 20 27H5Q1 27 1 23Z" fill="#888"/><path d="M11 8H21M10 12H20" stroke="#fff" stroke-width="1.800"/></svg></span>
        <span class="sb"><svg viewBox="0 0 28 28"><path d="M9 7Q9 1 14 1Q19 1 19 7ZM7 9H13V27Q7 26 7 19ZM15 9H21V19Q21 26 15 27Z" fill="#888"/><path d="M3 5L8 10M25 5L20 10M1 16H8M20 16H27M8 21L3 27M20 21L25 27" stroke="#888" stroke-width="2.600"/></svg></span>
        <span class="sb"><svg viewBox="0 0 28 28"><circle cx="14" cy="14" r="7.500" fill="none" stroke="#888" stroke-width="7"/><path d="M14 0V28M0 14H28M4 4L24 24M24 4L4 24" stroke="#888" stroke-width="4.500"/><circle cx="14" cy="14" r="4.400" fill="#fff"/></svg></span>
        <svg class="scaret"><use href="#i-down"/></svg>
      </div>
      <div class="ssearch"><div class="sbox"><svg class="mag"><use href="#i-search"/></svg><span>Search flows</span><svg class="car"><use href="#i-down"/></svg></div></div>
      <div class="tree">
        <div class="row"><svg class="chev"><use href="#i-chev"/></svg>Flows</div>
        <div class="row sel"><svg class="chev right"><use href="#i-chev"/></svg><svg class="flowic"><use href="#i-flow"/></svg>Flow 1</div>
        <div class="row"><svg class="chev right"><use href="#i-chev"/></svg>Subflows</div>
        <div class="row"><svg class="chev right"><use href="#i-chev"/></svg>Global Configuration Nodes</div>
      </div>
      <div class="hsplit"><i></i></div>
      <div class="ihead"><svg class="flowic"><use href="#i-flow"/></svg><b>Flow 1</b><span class="find"><svg><use href="#i-search"/></svg></span></div>
      <div class="prop"><span class="key">Flow</span><span class="val">"bb98c0b66fc11383"</span></div>
      <div class="blank"></div>
      <div class="tip">
        <div class="tipbtns"><span><svg viewBox="0 0 24 24"><path d="M3 10Q6 4 12 4Q17 4 20 8M21 14Q18 20 12 20Q7 20 4 16" fill="none" stroke="#888" stroke-width="3"/><path d="M22 2V11H13ZM2 22V13H11Z" fill="#888"/></svg></span><span><svg viewBox="0 0 24 24"><path d="M5 5L19 19M19 5L5 19" stroke="#888" stroke-width="6"/></svg></span></div>
        <p><span>Show the Info tab with</span><kbd>⌘g</kbd><kbd class="one">i</kbd><span>or the</span></p>
        <p class="l2"><span>Debug tab with</span><kbd>⌘g</kbd><kbd class="one">d</kbd></p>
      </div>
      <div class="foot"></div>
    </aside>
  </div>
</main>

<footer class="dock">
  <div class="app run"><svg viewBox="0 0 76 76"><rect width="76" height="76" rx="17" fill="#e6ebf2"/><path d="M17 0H42Q33 22 32 45H43Q43 62 48 76H17Q0 76 0 59V17Q0 0 17 0Z" fill="url(#gFinder)"/><path d="M20 22V28M56 22V28" stroke="#23303c" stroke-width="4" stroke-linecap="round"/><path d="M15 50Q38 70 61 50" fill="none" stroke="#1c1c22" stroke-width="3" stroke-linecap="round"/></svg></div>
  <div class="app"><svg viewBox="0 0 76 76"><rect width="76" height="76" rx="17" fill="#ecd6cf"/><rect x="12" y="12" width="15" height="15" rx="3" fill="#74dc5a"/><rect x="30" y="12" width="15" height="15" rx="3" fill="#f4bc3c"/><rect x="49" y="12" width="15" height="15" rx="3" fill="#e5893a"/><rect x="12" y="31" width="15" height="15" rx="3" fill="#ca2f2a"/><rect x="30" y="31" width="15" height="15" rx="3" fill="#a0a4a8"/><rect x="49" y="31" width="15" height="15" rx="3" fill="#e94e62"/><rect x="12" y="50" width="15" height="15" rx="3" fill="#8a48c8"/><rect x="30" y="50" width="15" height="15" rx="3" fill="#3a8cf0"/><rect x="49" y="50" width="15" height="15" rx="3" fill="#60c8a0"/></svg></div>
  <div class="app"><svg viewBox="0 0 76 76"><rect width="76" height="76" rx="17" fill="url(#gGrey)"/><circle cx="38" cy="38" r="33" fill="#232527"/><circle cx="38" cy="38" r="29" fill="#232527" stroke="#c4c8ca" stroke-width="4" stroke-dasharray="1.500 1.200"/><circle cx="38" cy="38" r="24.500" fill="#4a4c4e" stroke="#a4a8aa" stroke-width="5"/><circle cx="38" cy="38" r="15" fill="none" stroke="#84888a" stroke-width="3"/><path d="M38 38H61M38 38L26.500 18M38 38L26.500 58" stroke="#b4b8ba" stroke-width="4"/><circle cx="38" cy="38" r="4" fill="#333"/></svg><b class="badge">1</b></div>
  <div class="app run"><svg viewBox="0 0 76 76"><rect width="76" height="76" rx="17" fill="url(#gWhite)"/><circle cx="38" cy="38" r="33" fill="url(#gSafari)"/><circle cx="38" cy="38" r="29" fill="none" stroke="#d0e6fa" stroke-width="4" stroke-dasharray="1 2.040"/><path d="M62 18L35 35L41 42Z" fill="#e84c3c"/><path d="M15 58L35 35L41 42Z" fill="#f0f0f0"/></svg></div>
  <div class="app run"><svg viewBox="0 0 76 76"><rect width="76" height="76" rx="17" fill="#fdfdfd"/><g stroke-width="11" stroke-linecap="round"><path d="M17 31H31" stroke="#62c3ec"/><path d="M44 17V31" stroke="#58b486"/><path d="M31 45V59" stroke="#d0355e"/><path d="M45 45H59" stroke="#e2b348"/></g><path d="M36 22H31Q25 22 25 17Q26 11 31 11Q36 12 36 17Z" fill="#62c3ec"/><path d="M54 36V31Q54 26 59 25Q64 26 64 31Q64 36 59 36Z" fill="#58b486"/><path d="M22 40V45Q22 50 17 51Q11 50 11 45Q11 40 17 40Z" fill="#d0355e"/><path d="M39 54H45Q51 54 51 59Q50 64 45 64Q39 64 39 59Z" fill="#e2b348"/></svg><b class="badge dot">•</b></div>
  <div class="app run"><svg viewBox="0 0 76 76"><rect width="76" height="76" rx="17" fill="#f8f5fc"/><circle cx="38" cy="38" r="33" fill="#f2be42"/><path d="M38 38L9.400 21.500A33 33 0 0 0 38 71L52 46Z" fill="#4ea052"/><path d="M38 38L9.400 21.500A33 33 0 0 1 66.600 21.500H38Z" fill="#d9503f"/><circle cx="38" cy="38" r="16" fill="#fff"/><circle cx="38" cy="38" r="13" fill="#4a7ee8"/></svg></div>
  <div class="app run"><svg viewBox="0 0 76 76"><rect width="76" height="76" rx="17" fill="#fff"/><path d="M50 12L65 19V57L50 64Z" fill="#4a9aec"/><path d="M50 12V28L18 53L11 47Z" fill="#2a67ac"/><path d="M50 64V48L18 23L11 29Z" fill="#3878c8"/></svg></div>
  <div class="app run"><svg viewBox="0 0 76 76"><rect width="76" height="76" rx="17" fill="#e93932"/><path d="M9 23H26M11 24L27 56L42 24M34 38L47 56L63 24H44" fill="none" stroke="#fff" stroke-width="6.500" stroke-linejoin="round"/></svg></div>
  <div class="app run"><svg viewBox="0 0 76 76"><rect width="76" height="76" rx="17" fill="url(#gGrey)"/><rect x="3" y="3" width="70" height="70" rx="15" fill="#000"/><rect x="8" y="8" width="60" height="60" rx="10" fill="#262626"/><path d="M14 15L22 20L14 25M26 29H37" fill="none" stroke="#fff" stroke-width="3"/></svg></div>
  <div class="app run"><svg viewBox="0 0 76 76"><rect width="76" height="76" rx="17" fill="#f2f2f0"/><path d="M0 19V17Q0 0 17 0H59Q76 0 76 17V19Z" fill="#f8cc48"/><path d="M0 20H76" stroke="#bda25a" stroke-width="1.500"/><path d="M0 38H76M0 57H76" stroke="#d8d8d8" stroke-width="2"/></svg></div>
  <div class="app run"><svg viewBox="0 0 76 76"><circle cx="38" cy="38" r="39" fill="#65d36e"/><g fill="none" stroke="#10180f" stroke-linecap="round"><path d="M16 24Q41 17 63 31" stroke-width="8"/><path d="M18 39Q39 33 58 45" stroke-width="6.500"/><path d="M19 51Q38 47 54 56" stroke-width="5.500"/></g></svg></div>
  <div class="app run"><svg viewBox="0 0 76 76"><circle cx="38" cy="38" r="42" fill="#fff"/><path d="M24 16H21Q17 17 17 21V26H30V16Z" fill="#15344a"/><path d="M25 25Q27 12 38 12Q49 12 52 25Z" fill="#6ed28e"/><path d="M31 14L28 9M46 14L48 9" stroke="#6ed28e" stroke-width="2"/><path d="M17 25H60V31H54V54H21Q17 54 17 50Z" fill="#4e84ee"/><path d="M38 36L29 60M38 36L47 60M56 33V60" fill="none" stroke="#15344a" stroke-width="4.500"/><circle cx="38" cy="34" r="3.500" fill="#4e84ee" stroke="#15344a" stroke-width="2.600"/></svg></div>
  <i class="dsep"></i>
  <div class="app folder"><svg viewBox="0 0 86 76"><path d="M0 8Q0 2 6 2H24L34 10H80Q86 10 86 16V30H0Z" fill="#4a93cc"/><rect y="14" width="86" height="62" rx="6" fill="#86c9f4"/><circle cx="43" cy="42" r="17" fill="#58a4dc"/><path d="M43 33V50M36 43L43 50L50 43" fill="none" stroke="#92cef4" stroke-width="3"/></svg></div>
  <div class="app trash"><svg viewBox="0 0 68 86"><path d="M2 12H66L58 78Q57 84 50 85H18Q11 84 10 78Z" fill="#d8d8da"/><path d="M14 24L20 80M34 26L36 82M54 24L48 80" stroke="#e8e8ea" stroke-width="7"/><ellipse cx="34" cy="12" rx="33" ry="9" fill="#a8a4bc"/><path d="M6 9L16 4L22 0L30 6L42 1L50 8L62 6L60 16L44 18L30 20L12 16Z" fill="#e6e6e6"/><path d="M12 8l8 5-6 3zM36 5l8 9-9 4zM48 8l8 2-4 6zM24 12l7 6-8-1zM18 5l5 3-3 4z" fill="#55504c"/><path d="M22 9l10 1-6 4z" fill="#50b8c8"/></svg></div>
</footer>
</body>
</html>
```

FILE: styles.css
```css
*, *::before, *::after { box-sizing: border-box; }
body { margin: 0; width: 3600px; height: 2338px; overflow: hidden; position: relative; background: #10205a; font-family: "Liberation Sans", Arial, sans-serif; color: #333; }
svg { display: block; flex: none; }
i { display: block; }
.defs { position: absolute; }
.wallpaper { position: absolute; left: 0; top: 2200px; }

/* macOS menu bar */
.menubar { height: 86px; display: flex; align-items: center; font: 500 26px "Inter", sans-serif; color: #f1ebf3; background: linear-gradient(90deg, #67397f 0, #67397f 200px, #7f4070 640px, #834866 1240px, #654d76 1700px, #4c4c82 2080px, #304a8c 2430px, #1e449a 2800px, #1743a0 3600px); position: relative; }
.apple { width: 33px; height: 33px; margin-left: 36px; margin-right: 37px; margin-top: -4px; }
.menus { display: grid; grid-template-columns: 143px 84px 87px 100px 128px 175px 133px 84px 137px 1fr; width: 1200px; letter-spacing: -.35px; text-shadow: 0 3px 6px rgba(0,0,0,.25); padding-bottom: 2px; }
.menus b { font-weight: 700; }
.menus span, .menus b, .clock { white-space: nowrap; }
.tray { margin-left: auto; margin-right: 10px; }
.clock { width: 290px; letter-spacing: -.1px; padding-bottom: 2px; }

/* browser window */
.window { position: relative; margin-top: 2px; height: 2121px; border-radius: 22px; overflow: hidden; background: #fff; display: flex; flex-direction: column; border-bottom: 2px solid #9a9a9a; }
.tabstrip { height: 84px; flex: none; background: #f6dbcb; padding-top: 16px; display: flex; font: 400 24px "Inter", sans-serif; color: #202124; }
.lights { width: 187px; padding: 15px 0 0 42px; display: flex; gap: 16px; }
.lights i { width: 24px; height: 24px; border-radius: 50%; }
.red { background: #ec6a5e; } .amber { background: #f4be4f; } .green { background: #61c454; }
.tab { width: 396px; height: 68px; padding-left: 22px; display: flex; align-items: center; position: relative; flex: none; }
.tab::after { content: ""; flex: none; width: 2px; height: 40px; background: #a89890; margin-left: auto; }
.tab.nosep::after, .tab.active::after { background: transparent; }
.fav { width: 32px; height: 32px; margin-right: 18px; position: relative; flex: none; }
.fav svg { width: 32px; height: 32px; }
.wa { position: relative; }
.wa b { position: absolute; left: 0; top: 5px; width: 32px; text-align: center; font: 700 17px "Inter", sans-serif; color: #fff; }
.title { width: 268px; flex: none; margin-right: 13px; white-space: nowrap; letter-spacing: -.25px; padding-bottom: 1px; }
.fade { mask-image: linear-gradient(90deg, #000 220px, rgba(0,0,0,.1) 268px); }
.close { width: 24px; height: 24px; }
.active { background: #fff; border-radius: 18px 18px 0 0; }
.active::before { content: ""; position: absolute; left: -16px; right: -16px; bottom: 0; height: 16px; background: radial-gradient(circle at 0 0, transparent 16px, #fff 16.5px) left / 16px 16px no-repeat, radial-gradient(circle at 100% 0, transparent 16px, #fff 16.5px) right / 16px 16px no-repeat; }
.nrfav { color: #fff; } .dashfav { color: #8f2a26; }
.newtab { width: 24px; height: 24px; margin: 22px 0 0 33px; }
.tabsearch { width: 18px; height: 12px; margin: 29px 0 0 135px; }

.toolbar { height: 72px; flex: none; display: flex; align-items: center; padding-left: 28px; }
.nav { width: 32px; height: 32px; margin-right: 32px; }
.omnibox { width: 3168px; height: 56px; margin-left: -4px; border-radius: 28px; background: #e1e1e1; display: flex; align-items: center; font: 400 28px "Inter", sans-serif; color: #202124; }
.lock { width: 16px; height: 22px; margin: 0 24px 0 28px; }
.url { letter-spacing: 0; white-space: nowrap; }
.url em { font-style: normal; color: #5f6368; }
.share { width: 24px; height: 30px; margin-left: auto; margin-right: 36px; }
.star { width: 32px; height: 30px; margin-right: 20px; }
.panel { width: 28px; height: 28px; margin: 0 28px 0 30px; }
.avatar { width: 44px; height: 44px; margin-right: 39px; }
.dots { width: 6px; height: 28px; }

.bookmarks { height: 66px; flex: none; border-bottom: 2px solid #ccc; padding: 12px 0 0 28px; display: flex; gap: 32px; font: 400 24px/32px "Inter", sans-serif; color: #202124; }
.bookmarks svg, .bm { width: 32px; height: 32px; flex: none; }
.bm { position: relative; }
.tga b { position: absolute; left: 4px; top: 5px; font: 700 12px/22px "Liberation Sans", sans-serif; color: #8d3550; letter-spacing: -.5px; }
.htg { background: #000; text-align: center; }
.htg b { font: 700 13px/32px "Liberation Sans", sans-serif; color: #ddd; }
.amz svg { position: absolute; left: 0; top: 0; }
.amz b { position: absolute; left: 6px; top: -5px; font: 700 34px/32px "Liberation Sans", sans-serif; color: #000; }
.bt { white-space: nowrap; letter-spacing: -.2px; }
.t1 { margin-left: -16px; width: 206px; } .t2 { margin-left: -9px; width: 169px; }
.t3 { margin-left: -16px; width: 214px; } .t4 { margin-left: -16px; }

/* Node-RED header */
.nr-header { height: 82px; flex: none; background: #000; border-bottom: 2px solid #bbb; display: flex; align-items: center; padding-left: 39px; }
.nr-logo { width: 96px; height: 40px; margin-top: 14px; }
.nr-name { font-size: 32px; color: #c7c7c7; margin: 11px 0 0 9px; letter-spacing: -.2px; }
.deploy { margin-left: auto; width: 261px; height: 60px; background: #444; display: flex; align-items: center; font-size: 28px; color: #999; }
.dicon { width: 56px; height: 40px; margin: 0 22px 0 23px; }
.dcaret { width: 16px; height: 10px; margin-left: auto; margin-right: 17px; color: #c7c7c7; }
.user { width: 30px; height: 36px; margin: 0 84px 0 73px; }
.burger { width: 34px; margin-right: 41px; display: grid; gap: 6px; }
.burger i { height: 6px; background: #c7c7c7; border-radius: 1px; }

.editor { flex: 1; display: flex; min-height: 0; background: #f3f3f3; }
.foot { height: 51px; flex: none; background: #f3f3f3; border-top: 2px solid #bbb; display: flex; justify-content: flex-end; padding-top: 7px; gap: 7px; }

/* palette */
.palette { width: 360px; border-left: 2px solid #bbb; border-right: 2px solid #bbb; background: #fff; display: flex; flex-direction: column; }
.filter { height: 70px; flex: none; border-bottom: 2px solid #bbb; display: flex; align-items: center; padding-left: 20px; font-size: 28px; color: #aaa; padding-top: 5px; }
.filter svg { width: 20px; height: 20px; margin-right: 10px; margin-top: -6px; color: #888; }
.scroll { flex: 1; min-height: 0; }
.cat { height: 75px; background: #f3f3f3; display: flex; align-items: center; font-weight: 700; font-size: 28px; color: #444; padding: 2px 0 0 23px; }
.cat svg { width: 16px; height: 10px; margin: -1px 22px 0 0; }
.cat.second { height: 77px; border-top: 2px solid #ddd; letter-spacing: -.2px; }
.list { padding: 37px 0 36px 56px; display: grid; gap: 20px; }
.list:last-child { padding-bottom: 0; }

.node { position: relative; width: 245px; height: 60px; border: 2px solid #999; border-radius: 10px; display: flex; font-size: 26px; color: #333; letter-spacing: .3px; line-height: 57px; }
.node > span { flex: 1; text-align: center; white-space: nowrap; }
.ic { width: 62px; height: 56px; background: rgba(0,0,0,.05); border-right: 2px solid rgba(0,0,0,.08); border-radius: 8px 0 0 8px; flex: none; }
.ic.r { border-right: 0; border-left: 2px solid rgba(0,0,0,.08); border-radius: 0 8px 8px 0; }
.in::before, .out::after { content: ""; position: absolute; top: 18px; width: 20px; height: 21px; border: 2px solid #999; border-radius: 6px; background: #d9d9d9; }
.in::before { left: -10px; }
.out::after { right: -11px; }
.c-inject { background: #a9b9cd; } .c-debug { background: #8ea782; } .c-complete { background: #c9ebc4; }
.c-catch { background: #d79492; } .c-status { background: #9bbfce; } .c-link { background: #ddd; }
.c-comment { background: #fff; } .c-fn { background: #f4d2a8; } .c-switch { background: #dfd97b; }
.c-tpl { background: #e9b673; } .c-delay { background: #e3dff5; } .c-whisk { background: #789cbf; }
.c-iot { background: #4698f7; } .c-ui { background: #89c3cb; } .c-http { background: #e6e6b3; }

.btns { display: flex; height: 38px; border: 2px solid #ccc; background: #fff; }
.fb { width: 36px; display: flex; align-items: center; justify-content: center; }
.fb + .fb { border-left: 2px solid #ccc; width: 38px; }
.fb svg { width: 24px; height: 24px; }
.pfoot { padding-right: 12px; padding-top: 8px; }
.pfoot .fb svg { width: 15px; height: 15px; }
.wfoot { padding-right: 20px; }

/* workspace */
.workspace { width: 2596px; border-right: 2px solid #bbb; display: flex; flex-direction: column; background: #fff; }
.wtabs { height: 70px; flex: none; display: flex; align-items: flex-start; padding-left: 48px; box-shadow: inset 0 -2px #bbb; }
.wtab { width: 400px; height: 64px; margin-top: 6px; border: 2px solid #bbb; border-bottom: 0; background: #fff; font: 700 28px/60px "Liberation Sans", sans-serif; letter-spacing: -.2px; color: #444; padding-left: 24px; }
.wplus { width: 23px; height: 23px; margin: 24px 45px 0 auto; color: #888; }
.wcaret { width: 16px; height: 10px; margin: 31px 24px 0 0; color: #888; }
.canvas { flex: 1; position: relative; background: linear-gradient(90deg, #eee 1px, transparent 1px 39px, #eee 39px) 0 0 / 40px 40px, linear-gradient(#eee 1px, transparent 1px 39px, #eee 39px) 0 0 / 40px 40px; }
.wires { position: absolute; left: 0; top: 0; }
.wire path { fill: none; stroke: #fff; stroke-opacity: .8; stroke-width: 8; }
.wire path + path { stroke: #999; stroke-opacity: 1; stroke-width: 6; }
.big { position: absolute; width: 242px; height: 62px; font-size: 28px; letter-spacing: 0; line-height: 57px; }
.big .ic { width: 60px; height: 58px; }
.big > span { text-align: left; padding-left: 15px; }
.big > span:first-child { text-align: right; padding: 0 16px 0 0; }
.big.in::before, .big.out::after { width: 22px; height: 22px; }
.big.in::before { left: -12px; }
.big.out::after { right: -12px; }
.p-iot { left: 439px; top: 289px; width: 202px; }
.p-dbg { left: 999px; top: 289px; width: 282px; }
.p-fn { left: 679px; top: 489px; }
.p-info { left: 1079px; top: 489px; }
.p-lvl { left: 679px; top: 609px; }
.p-gauge { left: 1039px; top: 609px; }
.p-get { left: 219px; top: 929px; width: 322px; }
.p-hfn { left: 679px; top: 1009px; }
.p-http { left: 1039px; top: 929px; width: 202px; }
.abc { font: 700 22px/54px "Liberation Sans", sans-serif; color: #eef8f9; text-align: center; letter-spacing: -.8px; text-decoration: underline; text-decoration-thickness: 4px; text-underline-offset: 7px; padding-left: 3px; }
.dbgbtn { position: absolute; left: 1271px; top: 293px; width: 62px; height: 54px; background: #eee; border: 2px solid #999; border-radius: 8px; }
.dbgbtn i { margin: 6px 0 0 17px; width: 34px; height: 38px; background: #8ea782; border: 2px solid #999; border-radius: 8px; }
.state { position: absolute; left: 455px; top: 355px; display: flex; gap: 7px; font-size: 24px; line-height: 25px; color: #888; letter-spacing: .3px; }
.state i { width: 24px; height: 24px; border-radius: 6px; background: #6ba68b; }

/* sidebar */
.splitter { width: 14px; background: #f3f3f3; padding: 853px 0 0 4px; }
.splitter i { width: 7px; height: 100px; background: #ccc; }
.sidebar { width: 630px; border-left: 2px solid #bbb; border-right: 2px solid #bbb; background: #fff; display: flex; flex-direction: column; }
.stabs { height: 70px; flex: none; display: flex; padding-left: 7px; box-shadow: inset 0 -2px #bbb; }
.stab { width: 265px; height: 64px; margin: 6px 20px 0 0; border: 2px solid #bbb; border-bottom: 0; background: #fff; display: flex; align-items: center; font: 700 28px "Liberation Sans", sans-serif; color: #444; padding: 0 0 2px 23px; letter-spacing: -.5px; }
.stab svg { width: 12px; height: 23px; margin-right: 24px; color: #888; }
.sb { width: 56px; height: 56px; margin: 8px 12px 0 0; border: 2px solid #ccc; display: flex; align-items: center; justify-content: center; color: #777; }
.sb svg { width: 26px; height: 26px; }
.sb.on { background: #efefef; border-bottom: 4px solid #aaa; }
.scaret { width: 16px; height: 10px; margin: 31px 0 0 20px; color: #888; }
.ssearch { height: 78px; flex: none; background: #f3f3f3; border-bottom: 2px solid #ddd; padding: 12px 16px 0 0; display: flex; justify-content: flex-end; }
.sbox { width: 366px; height: 52px; border: 2px solid #ddd; border-radius: 6px; background: #fff; display: flex; align-items: center; font-size: 24px; color: #aaa; padding-left: 14px; }
.sbox span { padding-top: 1px; }
.mag { width: 19px; height: 19px; color: #888; margin: -4px 11px 0 0; }
.car { width: 14px; height: 9px; color: #888; margin-left: auto; margin-right: 10px; }
.tree { height: 750px; flex: none; background: #f7f7f7; font-size: 26px; color: #444; letter-spacing: .13px; }
.row { height: 48px; background: #fff; display: flex; align-items: center; padding-left: 12px; }
.row.sel { height: 52px; background: #fbeaca; padding-left: 52px; }
.chev { width: 15px; height: 10px; margin-right: 21px; }
.right { transform: rotate(-90deg); }
.sel .chev { margin-right: 18px; }
.flowic { width: 30px; height: 35px; margin-right: 12px; }
.hsplit { height: 14px; flex: none; border-top: 2px solid #ddd; border-bottom: 2px solid #ddd; background: #f3f3f3; padding: 1px 0 0 263px; }
.hsplit i { width: 100px; height: 7px; background: #ccc; }
.ihead { height: 86px; flex: none; background: #f3f3f3; border-bottom: 3px solid #ddd; display: flex; align-items: center; padding-left: 38px; font-size: 28px; color: #444; letter-spacing: -.4px; }
.ihead .flowic { width: 33px; height: 38px; margin: 4px 19px 0 0; }
.find { width: 43px; height: 40px; margin: 6px 16px 0 auto; border: 2px solid #ccc; border-radius: 4px; background: #fff; display: flex; align-items: center; justify-content: center; color: #888; }
.find svg { width: 19px; height: 19px; }
.prop { height: 63px; flex: none; border-bottom: 2px solid #ddd; display: flex; font-size: 26px; }
.key { width: 200px; background: #f7f7f7; border-right: 2px solid #ddd; padding: 12px 0 0 12px; color: #444; letter-spacing: .3px; }
.val { padding: 17px 0 0 18px; font-size: 28px; color: #a82e2a; letter-spacing: .45px; }
.blank { flex: 1; }
.tip { height: 298px; flex: none; border-top: 2px solid #ddd; box-shadow: 0 -10px 30px -6px rgba(0,0,0,.12); clip-path: inset(-40px 0 0 0); background: #fff; color: #aaa; font-size: 32px; }
.tipbtns { display: flex; gap: 8px; justify-content: flex-end; padding: 9px 12px 0 0; height: 89px; }
.tipbtns span { width: 38px; height: 38px; border: 2px solid #ccc; display: flex; align-items: center; justify-content: center; }
.tipbtns svg { width: 20px; height: 20px; }
.tip p { margin: 0; height: 61px; display: flex; align-items: center; white-space: nowrap; padding-left: 42px; letter-spacing: .2px; }
.tip p.l2 { padding-left: 139px; }
.tip kbd { width: 58px; height: 57px; font: 30px/52px "DejaVu Sans Mono", "Liberation Mono", monospace; border: 2px solid #ccc; border-radius: 6px; background: #f7f7f7; box-shadow: 2px 2px 1px #ccc; text-align: center; letter-spacing: -.4px; margin-left: 10px; flex: none; }
.tip kbd.one { width: 39px; margin: 0 10px 0 9px; }

/* dock */
.dock { position: absolute; left: 1086px; top: 2212px; width: 1428px; height: 116px; border-radius: 42px; border: 2px solid rgba(255,255,255,.25); background: linear-gradient(90deg, #e28d5c 0, #d98a70 200px, #cf8670 340px, #a866b8 480px, #9468dc 560px, #8e6ce8 800px, #8e70ea 1428px); box-shadow: 0 -6px 44px rgba(0,0,0,.24); display: flex; padding: 15px 0 0 15px; gap: 22px; }
.app { width: 76px; height: 76px; position: relative; flex: none; }
.app svg { width: 76px; height: 76px; overflow: visible; }
.run::after { content: ""; position: absolute; left: 33px; top: 87px; width: 8px; height: 8px; border-radius: 50%; background: #2a0468; }
.badge { position: absolute; left: 48px; top: -9px; width: 36px; height: 36px; border-radius: 50%; background: #ea5545; color: #fff; font: 400 22px/36px "Inter", sans-serif; text-align: center; }
.badge.dot { font-size: 16px; }
.dsep { width: 2px; height: 84px; background: #5a38b4; margin: -2px 4px 0 10px; }
.folder { width: 86px; }
.folder svg { width: 86px; }
.trash { width: 68px; }
.trash svg { width: 68px; height: 86px; margin-top: -7px; }
```
